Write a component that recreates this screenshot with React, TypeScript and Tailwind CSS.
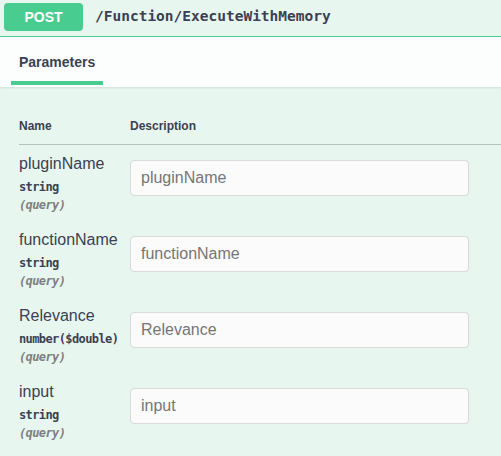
import React from 'react';

interface Param {
  name: string;
  type: string;
}

const params: Param[] = [
  { name: 'pluginName', type: 'string' },
  { name: 'functionName', type: 'string' },
  { name: 'Relevance', type: 'number($double)' },
  { name: 'input', type: 'string' },
];

const ParamRow = ({ param }: { param: Param }) => (
  <div className="flex items-start h-[76px]">
    <div className="w-[111px] shrink-0 pt-[1px]">
      <div className="text-[16px] leading-[20px] text-[#3b4151]">{param.name}</div>
      <div className="mt-[4px] font-['DejaVu_Sans_Mono',monospace] text-[12px] leading-[18px] font-bold tracking-[-0.6px] text-[#3b4151]">
        {param.type}
      </div>
      <div className="font-['DejaVu_Sans_Mono',monospace] text-[12px] leading-[18px] font-semibold italic tracking-[-0.6px] text-[#808080]">
        (query)
      </div>
    </div>
    <input
      type="text"
      placeholder={param.name}
      className="mt-[7px] h-[36px] w-[339px] rounded-[4px] border border-[#d9d9d9] bg-[#fbfbfb] px-[10px] text-[16px] text-[#3b4151] outline-none placeholder:text-[#757575]"
    />
  </div>
);

export default function App() {
  return (
    <div className="h-[456px] w-[501px] overflow-hidden bg-[#e8f6f0] font-['Liberation_Sans',Arial,sans-serif]">
      {/* summary bar */}
      <div className="flex h-[37px] items-start border-b border-[#49cc90] pl-[4px] pt-[3px]">
        <span className="flex h-[28px] w-[79px] items-center justify-center rounded-[4px] bg-[#49cc90] text-[14px] font-bold text-white">
          POST
        </span>
        <span className="flex h-[28px] items-center pl-[12px] font-['DejaVu_Sans_Mono',monospace] text-[14.5px] font-bold text-[#3b4151]">
          /Function/ExecuteWithMemory
        </span>
      </div>

      {/* tab header */}
      <div className="relative flex h-[50px] items-end bg-[#fcfefd] pl-[11px] pb-[2px] shadow-[0_1px_2px_rgba(0,0,0,0.1)]">
        <div className="flex h-[48px] w-[92px] flex-col justify-between">
          <div className="pl-[8px] pt-[17px] text-[14px] leading-[17px] font-bold text-[#3b4151]">Parameters</div>
          <div className="h-[4px] bg-[#49cc90]" />
        </div>
      </div>

      {/* parameter table */}
      <div className="pl-[19px] pt-[30px]">
        <div className="flex h-[28px] items-start border-b border-[#b7c2bc] text-[12px] leading-[14px] font-bold text-[#3b4151]">
          <div className="w-[111px] pt-[2px]">Name</div>
          <div className="pt-[2px]">Description</div>
        </div>
        <div className="pt-[8px]">
          {params.map((p) => (
            <ParamRow key={p.name} param={p} />
          ))}
        </div>
      </div>
    </div>
  );
}
